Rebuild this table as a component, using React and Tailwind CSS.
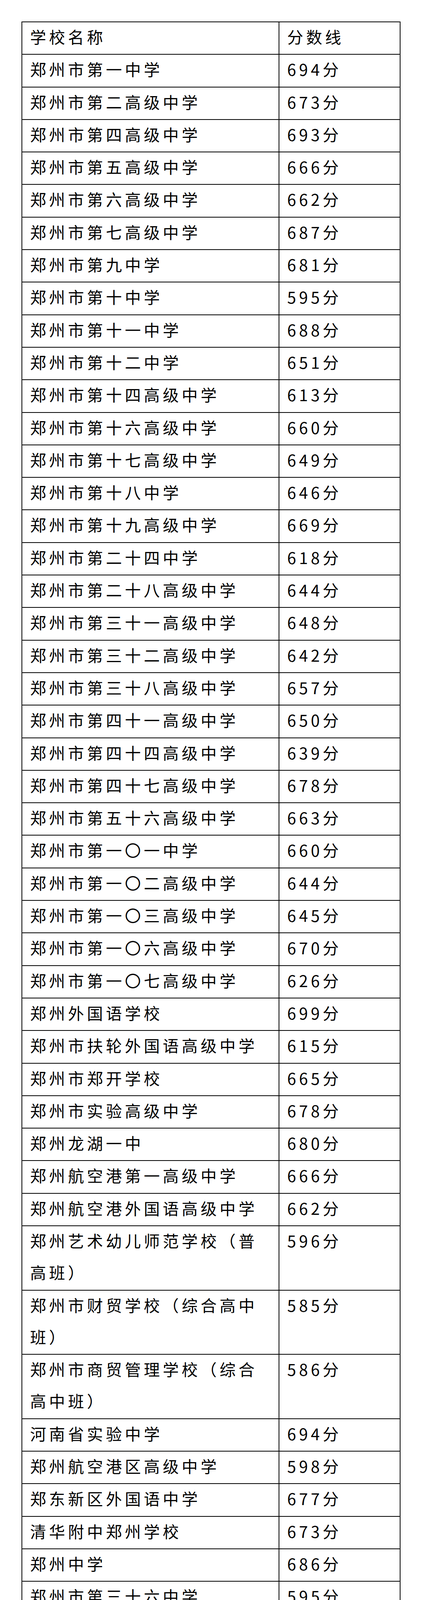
const rows = [
  ['郑州市第一中学', '694分'],
  ['郑州市第二高级中学', '673分'],
  ['郑州市第四高级中学', '693分'],
  ['郑州市第五高级中学', '666分'],
  ['郑州市第六高级中学', '662分'],
  ['郑州市第七高级中学', '687分'],
  ['郑州市第九中学', '681分'],
  ['郑州市第十中学', '595分'],
  ['郑州市第十一中学', '688分'],
  ['郑州市第十二中学', '651分'],
  ['郑州市第十四高级中学', '613分'],
  ['郑州市第十六高级中学', '660分'],
  ['郑州市第十七高级中学', '649分'],
  ['郑州市第十八中学', '646分'],
  ['郑州市第十九高级中学', '669分'],
  ['郑州市第二十四中学', '618分'],
  ['郑州市第二十八高级中学', '644分'],
  ['郑州市第三十一高级中学', '648分'],
  ['郑州市第三十二高级中学', '642分'],
  ['郑州市第三十八高级中学', '657分'],
  ['郑州市第四十一高级中学', '650分'],
  ['郑州市第四十四高级中学', '639分'],
  ['郑州市第四十七高级中学', '678分'],
  ['郑州市第五十六高级中学', '663分'],
  ['郑州市第一〇一中学', '660分'],
  ['郑州市第一〇二高级中学', '644分'],
  ['郑州市第一〇三高级中学', '645分'],
  ['郑州市第一〇六高级中学', '670分'],
  ['郑州市第一〇七高级中学', '626分'],
  ['郑州外国语学校', '699分'],
  ['郑州市扶轮外国语高级中学', '615分'],
  ['郑州市郑开学校', '665分'],
  ['郑州市实验高级中学', '678分'],
  ['郑州龙湖一中', '680分'],
  ['郑州航空港第一高级中学', '666分'],
  ['郑州航空港外国语高级中学', '662分'],
  ['郑州艺术幼儿师范学校（普高班）', '596分'],
  ['郑州市财贸学校（综合高中班）', '585分'],
  ['郑州市商贸管理学校（综合高中班）', '586分'],
  ['河南省实验中学', '694分'],
  ['郑州航空港区高级中学', '598分'],
  ['郑东新区外国语中学', '677分'],
  ['清华附中郑州学校', '673分'],
  ['郑州中学', '686分'],
  ['郑州市第三十六中学', '595分'],
  ['郑州市第五十三中学', '587分'],
  ['郑州市第七十四中学', '653分'],
  ['郑州市第二十九中学', '593分'],
  ['郑州市第二十中学', '603分'],
  ['郑州市第二外国语学校', '640分'],
  ['郑州市上街实验高级中学', '588分'],
]

// glyphs sit a few px above the line centre in the source table
function Cell({ className = '', children }) {
  return (
    <div className={className}>
      <p className="-mt-[4px] pb-[4px]">{children}</p>
    </div>
  )
}

function Row({ name, score, first }) {
  return (
    <div className={`flex ${first ? '' : 'border-t-2 border-black'}`}>
      <Cell className="w-[658px] shrink-0 border-r-2 border-black pl-[20px] pr-[40px] break-all">
        {name}
      </Cell>
      <Cell className="flex-1 pl-[20px]">{score}</Cell>
    </div>
  )
}

export default function App() {
  return (
    <div
      className="min-h-[4684px] bg-white pt-[55px] pl-[55px] text-black text-[41px] leading-[81.3px] tracking-[7.5px]"
      style={{ fontFamily: '"Noto Sans CJK SC", "Noto Sans", sans-serif' }}
    >
      <div className="w-[970px] border-2 border-black">
        <Row name="学校名称" score="分数线" first />
        {rows.map(([name, score]) => (
          <Row key={name} name={name} score={score} />
        ))}
      </div>
    </div>
  )
}
